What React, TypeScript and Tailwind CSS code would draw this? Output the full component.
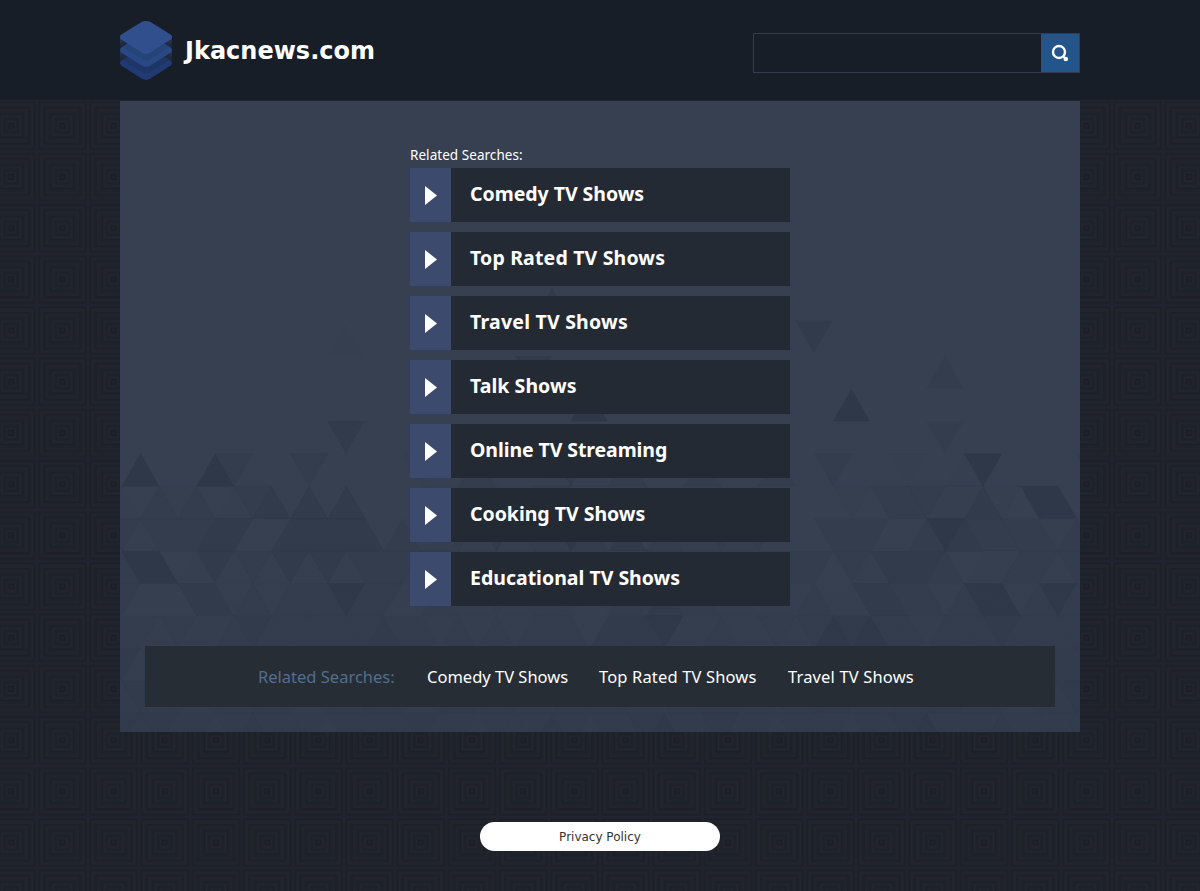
const results = [
  { label: "Comedy TV Shows", tracking: "tracking-[-0.03px]" },
  { label: "Top Rated TV Shows", tracking: "tracking-[0.17px]" },
  { label: "Travel TV Shows", tracking: "tracking-[0.22px]" },
  { label: "Talk Shows", tracking: "tracking-[0.05px]" },
  { label: "Online TV Streaming", tracking: "tracking-[-0.09px]" },
  { label: "Cooking TV Shows", tracking: "tracking-[-0.02px]" },
  { label: "Educational TV Shows", tracking: "tracking-[0px]" },
];

// Shade level of each triangle, from left to right; one string per row.
const shadeRows = [
  "0 4000420002 0000010021 0013102000 2100200200 0100140000 02",
  "1 0212012303 0300001020 1020010200 1000000010 2221131044 00",
  "2 1222330033 3330201213 1224213021 1212000222 0024322221 20",
  "2 4401312131 3122212012 1221021221 1212222021 3332011221 21",
  "2 0003312122 2422002112 1221012132 2110112003 3220244124 22",
  "2 2121123222 2223221212 1222033341 1211212434 2212223222 22",
  "3 1122322321 2232212232 2122321222 3221223212 2322122232 22",
  "2 3221223221 2232212322 3212223212 2322122322 1223222122 32",
  "3 2322123222 1222232212 2232122342 2322122212 2342223222 22",
].map((row) => row.replaceAll(" ", ""));

const shades = ["#374051", "#353f50", "#333d4e", "#313b4b", "#2f3849"];

const loose = [
  [345.5, 324, 1, 1],
  [814, 320.5, -1, 3],
  [945, 356, 1, 2],
  [851.5, 389, 1, 4],
  [552, 288, 1, 3],
  [533.5, 356, -1, 3],
  [589, 389, 1, 4],
  [346, 421, -1, 3],
  [945, 421, -1, 2],
];

function TriangleArt() {
  const half = 18.725;
  const step = 32.45;
  return (
    <svg className="absolute inset-0 h-full w-full" viewBox="120 101 960 631" aria-hidden="true">
      <defs>
        <linearGradient id="fade" x1="0" y1="0" x2="0" y2="1">
          <stop offset="0.7" stopColor="#2f3a4b" stopOpacity="0" />
          <stop offset="1" stopColor="#2f3a4b" stopOpacity="0.45" />
        </linearGradient>
      </defs>
      {loose.map(([x, y, dir, shade], i) => (
        <path
          key={i}
          d={dir === 1 ? `M${x} ${y}l${half} 32.5h-37.45z` : `M${x - half} ${y}h37.45l-${half} 32.5z`}
          fill={shades[shade]}
        />
      ))}
      {shadeRows.map((row, k) =>
        row.split("").map((digit, n) => {
          const i = n - 1;
          const left = 121.8 + half * i;
          const top = 453.8 + step * k;
          const up = (i + k) % 2 === 0;
          return digit === "0" ? null : (
            <path
              key={`${k}-${n}`}
              d={
                up
                  ? `M${left + half} ${top}l${half} ${step}h-37.45z`
                  : `M${left} ${top}h37.45l-${half} ${step}z`
              }
              fill={shades[Number(digit)]}
              stroke={shades[Number(digit)]}
              strokeWidth="0.4"
            />
          );
        }),
      )}
      <rect x="120" y="101" width="960" height="631" fill="url(#fade)" />
    </svg>
  );
}

function SquaresPattern() {
  const rings: [number, string, number][] = [
    [23.4, "#1b1f26", 1.4],
    [20.8, "#22252e", 1],
    [17.8, "#1b1f27", 1.4],
    [15.6, "#22252e", 1.2],
    [11.8, "#1b1f26", 1.4],
    [9.4, "#22262e", 1.2],
    [6.6, "#1c2027", 1.2],
    [4.4, "#22252d", 1.1],
    [2.2, "#1b1f25", 1.6],
  ];
  return (
    <svg className="absolute inset-0 h-full w-full" aria-hidden="true">
      <defs>
        <pattern id="squares" x="-14.4" y="100.2" width="51.2" height="51.2" patternUnits="userSpaceOnUse">
          <rect width="51.2" height="51.2" fill="#21242e" />
          <rect x="1.8" y="1.8" width="47.6" height="47.6" fill="#1f232b" />
          {rings.map(([r, color, w]) => (
            <rect
              key={r}
              x={25.6 - r}
              y={25.6 - r}
              width={r * 2}
              height={r * 2}
              fill="none"
              stroke={color}
              strokeWidth={w}
            />
          ))}
        </pattern>
      </defs>
      <rect width="100%" height="100%" fill="url(#squares)" />
    </svg>
  );
}

function Logo() {
  const d =
    "M21.5.9Q23 0 26 0T30.5.9L51 13.8Q53 16 51 18.2L30.5 31.6Q26 34.4 21.5 31.6L1 18.2Q-1 16 1 13.8Z";
  return (
    <svg className="h-[59px] w-[52px]" viewBox="0 0 52 59" aria-hidden="true">
      <defs>
        <linearGradient id="side" x1="0" y1="0" x2="0" y2="1">
          <stop offset="0" stopColor="#29375a" />
          <stop offset="1" stopColor="#1b2230" />
        </linearGradient>
      </defs>
      <path d="M0 16h52v11H0z" fill="url(#side)" />
      <path d="M0 29h52v11H0z" fill="url(#side)" />
      <path d={d} transform="translate(0 26)" fill="#213a74" />
      <path d="M3 39 26 24l23 15-19 12.3q-4 2.4-8 0z" fill="#1e3566" />
      <path d={d} transform="translate(0 13)" fill="#2a4885" />
      <path d="M3 26 26 11l23 15-19 12.3q-4 2.4-8 0z" fill="#254478" />
      <path d={d} fill="#324f8d" />
    </svg>
  );
}

export default function App() {
  return (
    <div className="relative min-h-[891px] bg-[#1f232b] font-['Noto_Sans',sans-serif] text-white">
      <SquaresPattern />
      <div className="relative">
        <header className="h-[101px] border-b border-[#21252f] bg-[#171e27]">
          <div className="mx-auto flex w-[960px] justify-between">
            <div className="flex pt-[21px]">
              <Logo />
              <h1 className="ml-[13px] pt-3.5 font-['DejaVu_Sans',sans-serif] text-2xl leading-8 font-bold">
                Jkacnews.com
              </h1>
            </div>
            <form className="mt-[33px] flex h-10 w-[327px] border border-[#333d4d]">
              <input className="min-w-0 flex-1 bg-transparent px-3 outline-none" aria-label="Search" />
              <button type="button" className="w-[38px] bg-[#23548a]" aria-label="Submit search">
                <svg className="h-[38px] w-[38px]" viewBox="0 0 38 38" fill="none" aria-hidden="true">
                  <circle cx="18" cy="18" r="6" stroke="#fff" strokeWidth="2.4" />
                  <path d="M22.3 22.5 25 25" stroke="#fff" strokeWidth="1.8" />
                  <circle cx="24.8" cy="25" r="2.3" fill="#fff" />
                </svg>
              </button>
            </form>
          </div>
        </header>

        <main className="relative mx-auto h-[631px] w-[960px] bg-[#374051]">
          <TriangleArt />
          <div className="relative px-[25px] pt-11">
            <section className="mx-auto w-[380px]">
              <h2 className="h-[23px] text-[13.5px] leading-5 tracking-[0.05px]">Related Searches:</h2>
              <ul className="flex flex-col gap-2.5">
                {results.map(({ label, tracking }) => (
                  <li key={label} className="flex h-[54px] bg-[#242a33]">
                    <span className="flex w-[41px] items-center bg-[#3c4b6d] pl-[15px]">
                      <svg className="h-[19px] w-3" viewBox="0 0 12 19" aria-hidden="true">
                        <path d="M0 0 12 9.5 0 19z" fill="#fff" />
                      </svg>
                    </span>
                    <a className={`pl-[19px] text-[19.5px] leading-[52px] font-bold whitespace-nowrap ${tracking}`}>
                      {label}
                    </a>
                  </li>
                ))}
              </ul>
            </section>
            <section className="mt-10 flex h-[61px] bg-[#262d35] pl-[113px] text-[16.5px] leading-[62px] whitespace-nowrap">
              <span className="w-[169px] text-[#526d8f]">Related Searches:</span>
              <a className="w-[172px]">Comedy TV Shows</a>
              <a className="w-[189px] tracking-[0.15px]">Top Rated TV Shows</a>
              <a className="tracking-[0.16px]">Travel TV Shows</a>
            </section>
          </div>
        </main>

        <footer className="flex justify-center pt-[90px]">
          <a className="h-[29px] w-60 rounded-[15px] bg-white text-center font-['DejaVu_Sans',sans-serif] text-xs leading-[30px] text-[#333]">
            Privacy Policy
          </a>
        </footer>
      </div>
    </div>
  );
}
